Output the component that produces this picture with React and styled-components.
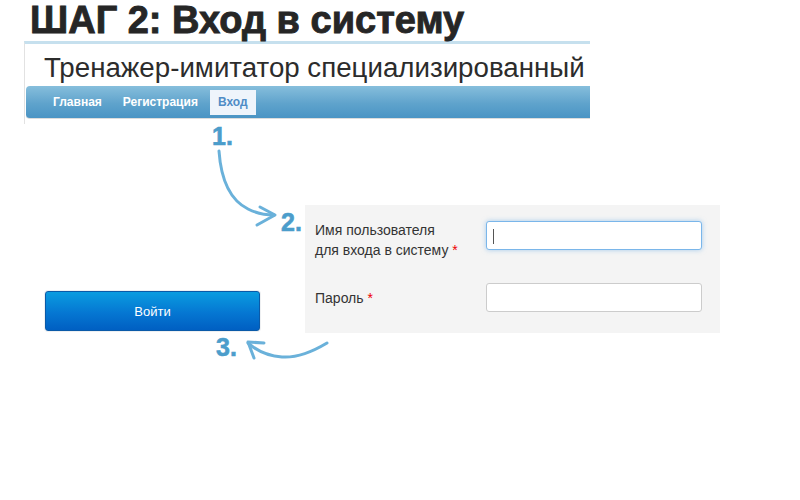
import React from "react";
import styled, { createGlobalStyle } from "styled-components";

const Global = createGlobalStyle`
  html, body { margin: 0; padding: 0; background: #fff; }
  body { font-family: "Liberation Sans", Arial, sans-serif; width: 800px; height: 500px; overflow: hidden; }
`;

const Page = styled.div`
  position: relative;
  width: 800px;
  height: 500px;
`;

const StepTitle = styled.h1`
  margin: 0;
  padding: 2px 0 0 30px;
  height: 37px;
  box-sizing: border-box;
  font-family: "Liberation Sans", Arial, sans-serif;
  font-weight: 700;
  font-size: 38px;
  line-height: 36px;
  color: #262626;
  letter-spacing: 0px;
  -webkit-text-stroke: 0.9px #262626;
  white-space: nowrap;
`;

const Header = styled.div`
  margin: 4px 0 0 24px;
  width: 566px;
  border-top: 3px solid #c6e0ee;
  border-left: 1px solid #e2e2e2;
  height: 83px;
  box-sizing: border-box;
  display: flex;
  flex-direction: column;
`;

const SiteName = styled.div`
  padding: 7px 0 0 19px;
  height: 42px;
  box-sizing: border-box;
  font-size: 27.7px;
  line-height: 34px;
  color: #2c2c2c;
  white-space: nowrap;
  overflow: hidden;
`;

const Nav = styled.nav`
  margin-left: 1px;
  height: 32px;
  border-radius: 4px 0 0 4px;
  background: linear-gradient(to bottom, #86bedc 0%, #5fa3cc 55%, #4a94c4 100%);
  border-bottom: 1px solid #dcdcdc;
  display: flex;
  align-items: center;
  padding-left: 18px;
`;

const NavItem = styled.a`
  display: block;
  padding: 0 ${(p) => (p.$active ? "8px" : "9px")};
  margin-right: ${(p) => (p.$active ? "0" : "3px")};
  height: 25px;
  line-height: 25px;
  font-size: 12px;
  font-weight: 700;
  color: ${(p) => (p.$active ? "#4f8cc6" : "#ffffff")};
  background: ${(p) => (p.$active ? "#eef4fb" : "transparent")};
  text-decoration: none;
`;

const Stage = styled.div`
  display: flex;
  align-items: flex-start;
  padding-top: 81px;
`;

const ButtonWrap = styled.div`
  margin: 85px 0 0 44px;
  padding: 1px;
  background: #eef0f2;
  border-radius: 4px;
`;

const LoginButton = styled.button`
  display: block;
  width: 215px;
  height: 40px;
  border: 1px solid #0a5aa8;
  border-radius: 3px;
  background: linear-gradient(to bottom, #0a9ce0 0%, #0577d2 55%, #005fc2 100%);
  color: #fff;
  font-family: "Liberation Sans", Arial, sans-serif;
  font-size: 13px;
  padding: 0;
`;

const FormPanel = styled.div`
  margin-left: 44px;
  width: 415px;
  height: 128px;
  background: #f4f4f4;
  box-sizing: border-box;
  padding: 15px 18px 0 10px;
  display: flex;
  flex-direction: column;
  gap: 23px;
`;

const Row = styled.div`
  display: flex;
  align-items: ${(p) => (p.$center ? "center" : "flex-start")};
`;

const Label = styled.label`
  width: 171px;
  font-size: 14px;
  line-height: 20px;
  color: #333;
`;

const Star = styled.span`
  color: #e00;
`;

const Input = styled.div`
  width: 216px;
  height: 29px;
  box-sizing: border-box;
  background: #fff;
  border: 1px solid ${(p) => (p.$focus ? "#7ab6ea" : "#cccccc")};
  border-radius: 3px;
  box-shadow: ${(p) => (p.$focus ? "0 0 5px rgba(102,170,230,0.55)" : "none")};
  position: relative;
  margin-top: ${(p) => p.$mt || "0"};
`;

const Caret = styled.span`
  position: absolute;
  left: 6px;
  top: 7px;
  width: 1px;
  height: 15px;
  background: #555;
`;

const Overlay = styled.svg`
  position: absolute;
  left: 0;
  top: 0;
  pointer-events: none;
`;

const Num = styled.span`
  position: absolute;
  left: ${(p) => p.$x}px;
  top: ${(p) => p.$y}px;
  font-family: "Liberation Sans", Arial, sans-serif;
  font-weight: 700;
  font-size: 25px;
  line-height: 25px;
  color: #4b9dcb;
  -webkit-text-stroke: 0.6px #4b9dcb;
`;

export default function App() {
  return (
    <Page>
      <Global />
      <StepTitle>ШАГ 2: Вход в систему</StepTitle>
      <Header>
        <SiteName>Тренажер-имитатор специализированный</SiteName>
        <Nav>
          <NavItem>Главная</NavItem>
          <NavItem>Регистрация</NavItem>
          <NavItem $active>Вход</NavItem>
        </Nav>
      </Header>
      <Stage>
        <ButtonWrap>
          <LoginButton>Войти</LoginButton>
        </ButtonWrap>
        <FormPanel>
          <Row>
            <Label>
              Имя пользователя
              <br />
              для входа в систему <Star>*</Star>
            </Label>
            <Input $focus $mt="1px">
              <Caret />
            </Input>
          </Row>
          <Row $center>
            <Label>
              Пароль <Star>*</Star>
            </Label>
            <Input />
          </Row>
        </FormPanel>
      </Stage>
      <Overlay width="800" height="500" viewBox="0 0 800 500">
        <g fill="none" stroke="#5aa9d6" strokeWidth="3" strokeLinecap="round" strokeLinejoin="round" opacity="0.9">
          <path d="M219 151 C 221 180, 230 200, 248 209 C 258 214, 266 215, 274 215" />
          <path d="M260 207 L 275 215 L 257 225" />
          <path d="M327 343 C 312 352, 296 358, 282 357 C 268 356, 256 350, 248 343" />
          <path d="M264 343 L 248 342 L 254 358" />
        </g>
      </Overlay>
      <Num $x={212} $y={124}>1.</Num>
      <Num $x={281} $y={210}>2.</Num>
      <Num $x={216} $y={335}>3.</Num>
    </Page>
  );
}
